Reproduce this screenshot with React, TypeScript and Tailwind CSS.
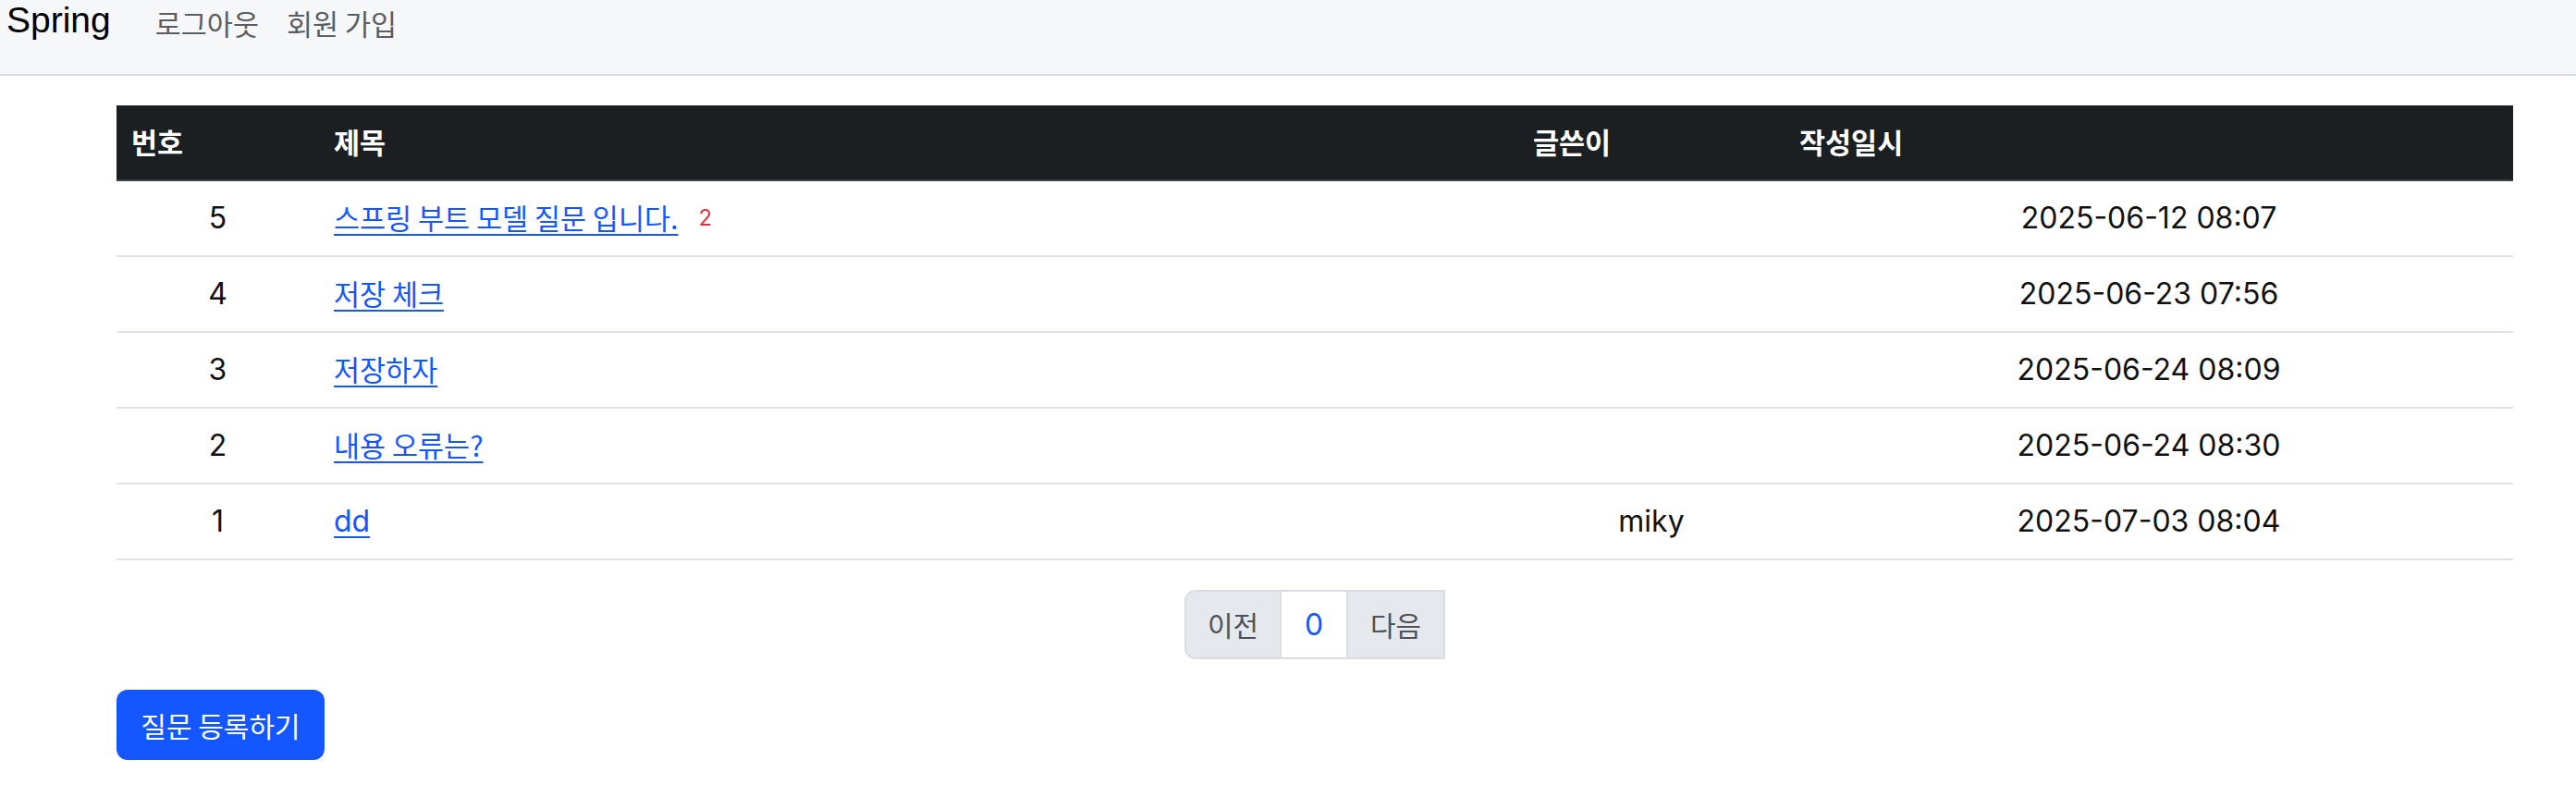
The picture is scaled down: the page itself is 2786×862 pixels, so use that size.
import React from "react"

const rows = [
  { id: 5, title: "스프링 부트 모델 질문 입니다.", comments: 2, author: "", date: "2025-06-12 08:07" },
  { id: 4, title: "저장 체크", comments: 0, author: "", date: "2025-06-23 07:56" },
  { id: 3, title: "저장하자", comments: 0, author: "", date: "2025-06-24 08:09" },
  { id: 2, title: "내용 오류는?", comments: 0, author: "", date: "2025-06-24 08:30" },
  { id: 1, title: "dd", comments: 0, author: "miky", date: "2025-07-03 08:04" },
]

const ko = "font-['Noto_Sans_CJK_KR','Noto_Sans',sans-serif]"
const latin = "font-['Inter','Noto_Sans_CJK_KR',sans-serif]"

export default function App() {
  return (
    <div className="min-h-screen bg-white text-[#111]">
      {/* navbar */}
      <nav className="h-[82px] bg-[#f6f7f9] border-b-2 border-[#d9dde1] flex items-start pl-[7px]">
        <span className="font-['Liberation_Sans',Arial,sans-serif] text-[39px] leading-[44px] text-black">
          Spring
        </span>
        <div className={`${ko} flex gap-[30px] ml-[48px] text-[30.5px] leading-[50px] text-[#5a5d61]`}>
          <a>로그아웃</a>
          <a>회원 가입</a>
        </div>
      </nav>

      <div className="ml-[126px] w-[2592px] mt-[32px]">
        {/* table head */}
        <div className={`${ko} grid grid-cols-[219px_1297px_288px_788px] h-[82px] items-center bg-[#1c1f22] border-b-2 border-[#3b3f43] text-white font-bold text-[30.5px]`}>
          <div className="pl-[16px]">번호</div>
          <div className="pl-[16px]">제목</div>
          <div className="pl-[16px]">글쓴이</div>
          <div className="pl-[16px]">작성일시</div>
        </div>

        {/* table body */}
        {rows.map(r => (
          <div
            key={r.id}
            className="grid grid-cols-[219px_1297px_288px_788px] h-[82px] items-center border-b-2 border-[#dee2e6]"
          >
            <div className={`${latin} text-[32px] text-center`}>{r.id}</div>
            <div className="pl-[16px] flex items-center">
              <a
                className={`${r.title === "dd" ? latin + " text-[32px]" : ko + " text-[30.5px]"} text-[#1456ff] underline decoration-2 underline-offset-[5px]`}
              >
                {r.title}
              </a>
              {r.comments > 0 && (
                <span className={`${latin} text-[24px] text-[#dc3545] ml-[22px]`}>{r.comments}</span>
              )}
            </div>
            <div className={`${latin} text-[32px] text-center`}>{r.author}</div>
            <div className={`${latin} text-[32px] text-center`}>{r.date}</div>
          </div>
        ))}

        {/* pagination */}
        <div className="flex justify-center mt-[32px]">
          <div className="flex h-[75px]">
            <div className={`${ko} w-[105px] flex items-center justify-center bg-[#e5e8ec] border-2 border-[#dadee2] rounded-l-[12px] text-[30px] text-[#4f5357]`}>
              이전
            </div>
            <div className={`${latin} w-[70px] flex items-center justify-center bg-white border-y-2 border-[#dadee2] text-[32px] text-[#1456ff]`}>
              0
            </div>
            <div className={`${ko} w-[107px] flex items-center justify-center bg-[#e5e8ec] border-2 border-[#dadee2] text-[30px] text-[#4f5357]`}>
              다음
            </div>
          </div>
        </div>

        <button className={`${ko} mt-[33px] w-[225px] h-[76px] rounded-[12px] bg-[#1456ff] text-white text-[30px]`}>
          질문 등록하기
        </button>
      </div>
    </div>
  )
}
